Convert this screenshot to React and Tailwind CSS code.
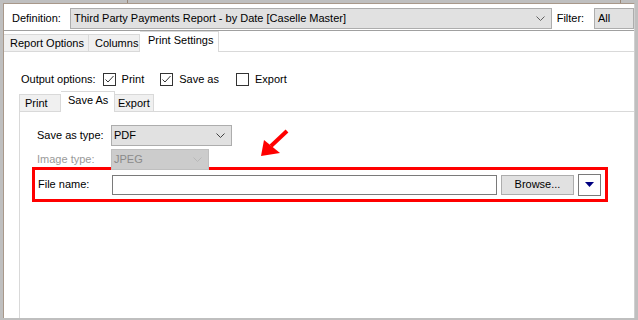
import React from "react";

const Chevron = ({ color = "#606060" }) => (
  <svg width="9" height="5" viewBox="0 0 9 5" className="shrink-0">
    <path d="M0.5 0.5 L4.5 4.5 L8.5 0.5" fill="none" stroke={color} strokeWidth="1" />
  </svg>
);

const Check = ({ checked, label, className = "" }) => (
  <div className={`flex items-center ${className}`}>
    <div className="w-[13px] h-[13px] border border-[#333333] bg-white flex items-center justify-center">
      {checked && (
        <svg width="11" height="11" viewBox="0 0 11 11">
          <path d="M1.5 5.5 L4 8 L9.5 2" fill="none" stroke="#333333" strokeWidth="1" />
        </svg>
      )}
    </div>
    <span className="ml-[6px]">{label}</span>
  </div>
);

export default function App() {
  return (
    <div
      className="relative w-[638px] h-[320px] overflow-hidden bg-[#bfbfbf] text-[11px] text-black pt-[3px] pl-[3px] pr-[3px] pb-[2px]"
      style={{ fontFamily: '"Liberation Sans", Arial, sans-serif' }}
    >
      {/* small marks in the top strip */}
      <div className="absolute left-[127px] top-0 w-px h-[3px] bg-[#9a8878]" />
      <div className="absolute left-[620px] top-0 w-px h-[3px] bg-[#9a8878]" />

      <div className="h-full bg-white border-l border-t border-r border-[#a8988a] border-r-[#d0d0d0] flex flex-col overflow-hidden">
        {/* definition row */}
        <div className="flex items-center h-[27px] pt-[3px] pl-[8px] border-b border-[#a0a0a0]">
          <span className="w-[59px]">Definition:</span>
          <div className="w-[490px] h-[21px] bg-[#e1e1e1] border border-[#adadad] flex items-center pl-[3px] pr-[6px]">
            <span className="flex-1 whitespace-nowrap">Third Party Payments Report - by Date [Caselle Master]</span>
            <Chevron />
          </div>
          <span className="ml-[5px] w-[38px]">Filter:</span>
          <div className="w-[40px] h-[21px] bg-[#e1e1e1] border border-[#adadad] flex items-center pl-[3px] shrink-0">
            All
          </div>
        </div>

        {/* top tabs */}
        <div className="flex items-end h-[21px] border-b border-[#d9d9d9]">
          <div className="h-[18px] -mb-px border border-[#d9d9d9] bg-[#f0f0f0] w-[86px] pl-[6px] flex items-center -ml-px">
            Report Options
          </div>
          <div className="h-[18px] -mb-px border border-l-0 border-[#d9d9d9] bg-[#f0f0f0] w-[51px] pl-[6px] flex items-center">
            Columns
          </div>
          <div className="h-[21px] -mb-px border border-b-0 border-l-0 border-[#d9d9d9] bg-white w-[79px] pl-[8px] pb-[3px] flex items-center">
            Print Settings
          </div>
        </div>

        {/* output options */}
        <div className="flex items-center pl-[17px] mt-[20px] h-[14px]">
          <span className="mr-[7px]">Output options:</span>
          <Check checked label="Print" />
          <Check checked label="Save as" className="ml-[16px]" />
          <Check label="Export" className="ml-[17px]" />
        </div>

        {/* inner tabs */}
        <div className="flex items-end h-[21px] mt-[5px] ml-[15px] border-b border-[#d9d9d9]">
          <div className="h-[18px] -mb-px border border-[#d9d9d9] bg-[#f0f0f0] w-[42px] pl-[5px] flex items-center">
            Print
          </div>
          <div className="h-[21px] -mb-px border border-b-0 border-l-0 border-[#d9d9d9] bg-white w-[54px] pl-[7px] pb-[4px] flex items-center">
            Save As
          </div>
          <div className="h-[18px] -mb-px border border-l-0 border-[#d9d9d9] bg-[#f0f0f0] w-[39px] pl-[3px] flex items-center">
            Export
          </div>
        </div>

        {/* inner tab page */}
        <div className="flex-1 ml-[15px] border-l border-[#d9d9d9] pt-[13px] pl-[12px]">
          <div className="flex items-center h-[21px] pl-[5px]">
            <span className="w-[74px]">Save as type:</span>
            <div className="w-[121px] h-[21px] bg-[#e1e1e1] border border-[#adadad] flex items-center pl-[2px] pr-[6px]">
              <span className="flex-1">PDF</span>
              <Chevron color="#404040" />
            </div>
          </div>
          <div className="flex items-center h-[21px] mt-[3px] pl-[5px]">
            <span className="w-[74px] text-[#9a9a9a]">Image type:</span>
            <div className="w-[98px] h-[21px] bg-[#cccccc] border border-[#bfbfbf] flex items-center pl-[2px] pr-[6px]">
              <span className="flex-1 text-[#8a8a8a]">JPEG</span>
              <Chevron color="#b8b8b8" />
            </div>
          </div>

          {/* highlighted file name row */}
          <div className="-mt-[3px] w-[576px] h-[35px] border-[3px] border-[#ff0000] flex items-center pl-[3px]">
            <span className="w-[74px]">File name:</span>
            <div className="w-[385px] h-[20px] bg-white border border-[#7a7a7a]" />
            <div className="ml-[4px] w-[73px] h-[20px] bg-[#e1e1e1] border border-[#adadad] flex items-center justify-center">
              Browse...
            </div>
            <div className="ml-[4px] w-[23px] h-[22px] bg-white border border-[#7a7a7a] flex items-center justify-center">
              <svg width="9" height="5" viewBox="0 0 9 5">
                <path d="M0 0 L9 0 L4.5 5 Z" fill="#000080" />
              </svg>
            </div>
          </div>
        </div>
      </div>

      {/* annotation arrow */}
      <svg className="absolute left-0 top-0 pointer-events-none" width="638" height="320">
        <line x1="287" y1="131" x2="271" y2="146" stroke="#ff0000" strokeWidth="4" />
        <polygon points="261,156 264,140 280,153" fill="#ff0000" />
      </svg>
    </div>
  );
}
